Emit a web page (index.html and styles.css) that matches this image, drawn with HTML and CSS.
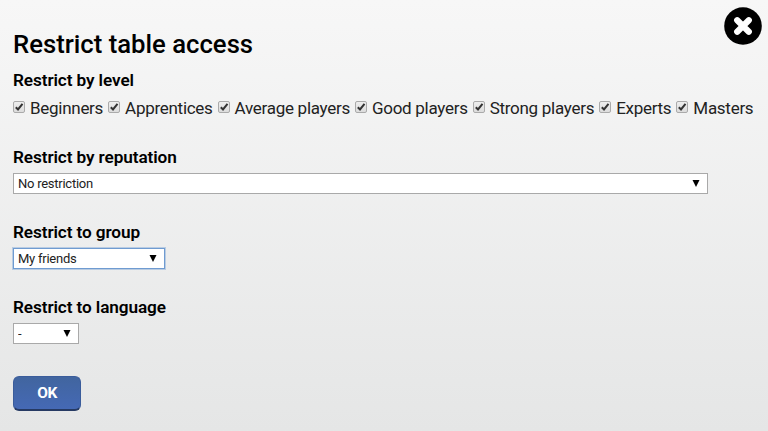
FILE: index.html
```html
<!DOCTYPE html>
<html lang="en">
<head>
<meta charset="UTF-8">
<meta name="viewport" content="width=device-width, initial-scale=1.0">
<title>Restrict table access</title>
<link rel="stylesheet" href="styles.css">
</head>
<body>
<div class="dialog">
    <button type="button" class="close" aria-label="Close">
        <svg width="38" height="38" viewBox="0 0 38 38">
            <circle cx="19" cy="19" r="18.8" fill="#000"/>
            <path d="M13.2 13.2L24.8 24.8M24.8 13.2L13.2 24.8" stroke="#fff" stroke-width="6.2" stroke-linecap="round"/>
        </svg>
    </button>

    <h2>Restrict table access</h2>

    <form id="restrictForm">
        <h3>Restrict by level</h3>
        <div class="levels">
            <label><input type="checkbox" checked><span>Beginners</span></label>
            <label><input type="checkbox" checked><span>Apprentices</span></label>
            <label><input type="checkbox" checked><span>Average players</span></label>
            <label><input type="checkbox" checked><span>Good players</span></label>
            <label><input type="checkbox" checked><span>Strong players</span></label>
            <label><input type="checkbox" checked><span>Experts</span></label>
            <label><input type="checkbox" checked><span>Masters</span></label>
        </div>

        <h3>Restrict by reputation</h3>
        <select class="reputation">
            <option>No restriction</option>
        </select>

        <h3>Restrict to group</h3>
        <select class="group">
            <option>My friends</option>
        </select>

        <h3>Restrict to language</h3>
        <select class="language">
            <option>-</option>
        </select>

        <button type="button" class="ok">OK</button>
    </form>
</div>
</body>
</html>
```

FILE: styles.css
```css
* {
    box-sizing: border-box;
}

body {
    font-family: Roboto, sans-serif;
    margin: 0;
    color: #000;
}

.dialog {
    position: relative;
    height: 431px;
    padding: 29px 13px 0;
    background: linear-gradient(#f7f7f7, #e5e6e6);
}

.close {
    position: absolute;
    top: 7px;
    right: 6px;
    width: 38px;
    height: 38px;
    padding: 0;
    border: none;
    background: none;
    cursor: pointer;
}

.close svg {
    display: block;
}

h2 {
    margin: 0 0 10px;
    font-size: 25.7px;
    font-weight: 500;
    line-height: 30px;
}

h3 {
    margin: 0;
    font-size: 17.2px;
    font-weight: 600;
    line-height: 22px;
    letter-spacing: -0.1px;
}

form {
    display: flex;
    flex-direction: column;
    align-items: flex-start;
}

.levels {
    display: flex;
    gap: 5px;
    height: 22px;
    margin: 6px 0 27px;
}

.levels label {
    display: flex;
    gap: 5px;
    font-size: 17px;
    line-height: 22px;
    letter-spacing: -0.28px;
    white-space: nowrap;
    color: #222;
}

input[type="checkbox"] {
    appearance: none;
    flex: none;
    width: 12px;
    height: 12px;
    margin: 4px 0 0;
    border: 1px solid #aaa;
    border-radius: 2px;
    background: linear-gradient(#eee, #dcdcdc);
}

input[type="checkbox"]:checked {
    background: url("data:image/svg+xml,%3Csvg xmlns='http://www.w3.org/2000/svg' viewBox='0 0 10 10'%3E%3Cpath d='M1.8 5.2L4 7.4L8.5 1.8' fill='none' stroke='%23333' stroke-width='2'/%3E%3C/svg%3E") center / 10px 10px no-repeat, linear-gradient(#eee, #dcdcdc);
}

select {
    appearance: none;
    height: 21px;
    margin: 5px 0 27px;
    padding: 0 4px;
    border: 1px solid #a9a9a9;
    border-radius: 0;
    outline: none;
    font-family: inherit;
    font-size: 13px;
    letter-spacing: -0.25px;
    color: #222;
    background: #fff url("data:image/svg+xml,%3Csvg xmlns='http://www.w3.org/2000/svg' viewBox='0 0 8 7'%3E%3Cpath d='M0.5 0H7.5L4 7Z' fill='%23000'/%3E%3C/svg%3E") right 7px center / 8px 7px no-repeat;
}

.reputation {
    width: 695px;
}

.group {
    width: 152px;
    border-color: #6f9bd1;
    box-shadow: 0 0 0 1px rgba(111, 155, 209, 0.4);
}

.language {
    width: 66px;
    margin-bottom: 32px;
}

.ok {
    width: 68px;
    height: 35px;
    padding: 0;
    border: 1px solid #3a5c9b;
    border-bottom: 2px solid #263a63;
    border-radius: 6px;
    background: linear-gradient(#41659f, #4569b5);
    color: #fff;
    font-family: inherit;
    font-size: 15.5px;
    font-weight: 700;
    letter-spacing: -0.5px;
    cursor: pointer;
}
```
